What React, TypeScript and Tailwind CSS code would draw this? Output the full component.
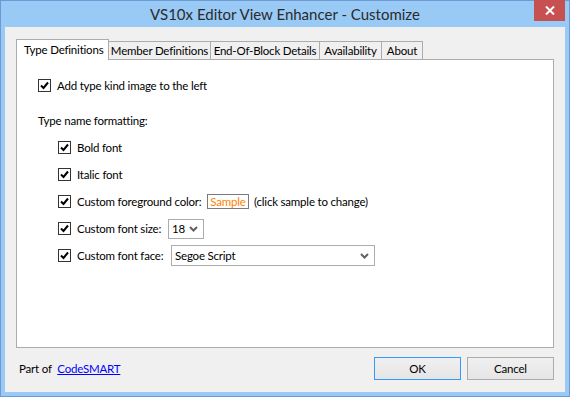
import type { ReactNode } from 'react';

const font = "font-['Lato','Segoe_UI',sans-serif]";

function CheckBox() {
    return (
        <span className="flex h-[13px] w-[13px] shrink-0 items-center justify-center border border-[#333333] bg-white">
            <svg width="11" height="11" viewBox="0 0 11 11">
                <path d="M2 5.5 L4.5 8 L9 2.5" fill="none" stroke="#000" strokeWidth="2" />
            </svg>
        </span>
    );
}

function Chevron() {
    return (
        <svg width="9" height="6" viewBox="0 0 9 6">
            <path d="M1 1 L4.5 4.5 L8 1" fill="none" stroke="#606060" strokeWidth="2" />
        </svg>
    );
}

function CheckRow({ children, sub }: { children: ReactNode; sub?: boolean }) {
    return (
        <div className={`flex h-[21px] items-center whitespace-nowrap ${sub ? 'pl-[20px]' : ''}`}>
            <CheckBox />
            <div className="ml-[6px] flex items-center">{children}</div>
        </div>
    );
}

const tabs = [
    { label: 'Member Definitions', w: 'w-[102px]' },
    { label: 'End-Of-Block Details', w: 'w-[109px]' },
    { label: 'Availability', w: 'w-[62px]' },
    { label: 'About', w: 'w-[41px]' },
];

export default function App() {
    return (
        <div className={`relative flex h-[397px] w-[570px] flex-col border border-[#6b9bd2] bg-[#99c9f5] text-[11.5px] tracking-[-0.2px] text-black ${font}`}>

            {/* ── Title bar ── */}
            <div className="flex h-[26px] items-center justify-center">
                <span className="whitespace-nowrap text-[15px] tracking-normal text-[#2b2b2b]">VS10x Editor View Enhancer - Customize</span>
            </div>
            <div className="absolute right-[4px] top-[-1px] flex h-[21px] w-[31px] items-center justify-center bg-[#c75050]">
                <svg width="10" height="9" viewBox="0 0 10 9">
                    <path d="M1 0.5 L9 8.5 M9 0.5 L1 8.5" stroke="#fff" strokeWidth="2" />
                </svg>
            </div>

            {/* ── Client ── */}
            <div className="mx-[4px] mb-[4px] flex flex-1 flex-col bg-[#f0f0f0] px-[11px] pt-[12px]">

                {/* tabs */}
                <div className="relative z-10 flex h-[20px] items-end whitespace-nowrap">
                    <div className="-mb-px flex h-[21px] w-[93px] items-center border-x border-t border-[#acacac] bg-white pb-[1px] pl-[7px]">
                        Type Definitions
                    </div>
                    {tabs.map((t) => (
                        <div
                            key={t.label}
                            className={`flex h-[18px] ${t.w} items-center justify-center border-r border-t border-[#acacac] bg-[#f0f0f0]`}
                        >
                            {t.label}
                        </div>
                    ))}
                </div>

                {/* panel */}
                <div className="flex h-[289px] flex-col gap-[6px] border border-[#acacac] bg-white pl-[21px] pt-[15px]">
                    <CheckRow>Add type kind image to the left</CheckRow>

                    <div className="mt-[8px] flex h-[21px] items-center">Type name formatting:</div>

                    <CheckRow sub>Bold font</CheckRow>
                    <CheckRow sub>Italic font</CheckRow>
                    <CheckRow sub>
                        <span className="w-[130px] shrink-0">Custom foreground color:</span>
                        <span className="flex h-[15px] w-[42px] shrink-0 items-center justify-center border border-[#7a7a7a] text-[#ff7f00]">
                            Sample
                        </span>
                        <span className="ml-[5px]">(click sample to change)</span>
                    </CheckRow>
                    <CheckRow sub>
                        <span className="w-[91px] shrink-0">Custom font size:</span>
                        <span className="flex h-[20px] w-[36px] shrink-0 items-center justify-between border border-[#acacac] bg-white pl-[3px] pr-[5px]">
                            18
                            <Chevron />
                        </span>
                    </CheckRow>
                    <CheckRow sub>
                        <span className="w-[94px] shrink-0">Custom font face:</span>
                        <span className="flex h-[21px] w-[204px] shrink-0 items-center justify-between border border-[#acacac] bg-white pl-[3px] pr-[5px]">
                            Segoe Script
                            <Chevron />
                        </span>
                    </CheckRow>
                </div>

                {/* footer */}
                <div className="mt-[9px] flex items-center justify-between">
                    <p className="whitespace-nowrap pl-[3px]">
                        Part of{' '}
                        <a href="#" className="ml-[3px] text-[#0000ff] underline">CodeSMART</a>
                    </p>
                    <div className="flex gap-[6px]">
                        <button className="h-[23px] w-[87px] border border-[#3399ff] bg-gradient-to-b from-[#f0f0f0] to-[#e5e5e5]">
                            OK
                        </button>
                        <button className="h-[23px] w-[87px] border border-[#acacac] bg-gradient-to-b from-[#f0f0f0] to-[#e5e5e5]">
                            Cancel
                        </button>
                    </div>
                </div>
            </div>
        </div>
    );
}
